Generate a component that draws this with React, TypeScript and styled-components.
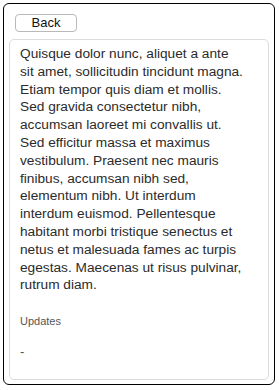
import styled, { createGlobalStyle } from "styled-components";

const GlobalStyle = createGlobalStyle`
  html, body {
    margin: 0;
    padding: 0;
    background: #ffffff;
  }
  body {
    font-family: "Liberation Sans", Arial, Helvetica, sans-serif;
  }
`;

// wrapped the same way as the original
const bodyLines = [
  "Quisque dolor nunc, aliquet a ante",
  "sit amet, sollicitudin tincidunt magna.",
  "Etiam tempor quis diam et mollis.",
  "Sed gravida consectetur nibh,",
  "accumsan laoreet mi convallis ut.",
  "Sed efficitur massa et maximus",
  "vestibulum. Praesent nec mauris",
  "finibus, accumsan nibh sed,",
  "elementum nibh. Ut interdum",
  "interdum euismod. Pellentesque",
  "habitant morbi tristique senectus et",
  "netus et malesuada fames ac turpis",
  "egestas. Maecenas ut risus pulvinar,",
  "rutrum diam.",
];

const App = () => {
  return (
    <>
      <GlobalStyle />
      <Frame>
        <Toolbar>
          <BackButton type="button">Back</BackButton>
        </Toolbar>
        <Card>
          <Description>{bodyLines.join("\n")}</Description>
          <SectionLabel>Updates</SectionLabel>
          <SectionValue>-</SectionValue>
        </Card>
      </Frame>
    </>
  );
};

export default App;

const Frame = styled.div`
  box-sizing: border-box;
  margin: 3px 0 0 3px;
  width: 272px;
  height: 382px;
  border: 1px solid #000;
  border-radius: 6px;
  padding: 10px 5px 4px 5px;
  display: flex;
  flex-direction: column;
  gap: 7px;
`;

const Toolbar = styled.div`
  display: flex;
  padding-left: 6px;
`;

const BackButton = styled.button`
  box-sizing: border-box;
  width: 62px;
  height: 18px;
  padding: 0;
  border: 1px solid #b9b9b9;
  border-radius: 4px;
  background: #fff;
  color: #111;
  font-family: "Liberation Sans", Arial, sans-serif;
  font-size: 13px;
  line-height: 16px;
`;

const Card = styled.div`
  box-sizing: border-box;
  flex: 1;
  border: 1px solid #dcdcdc;
  border-radius: 5px;
  padding: 5px 4px 0 10px;
  overflow: hidden;
`;

const Description = styled.p`
  margin: 0;
  white-space: pre-line;
  font-size: 13.7px;
  line-height: 17.8px;
  color: #2b2b2b;
`;

const SectionLabel = styled.div`
  margin-top: 20px;
  font-size: 11px;
  line-height: 14px;
  color: #555;
`;

const SectionValue = styled.div`
  margin-top: 16px;
  font-size: 13px;
  line-height: 16px;
  color: #555;
`;
